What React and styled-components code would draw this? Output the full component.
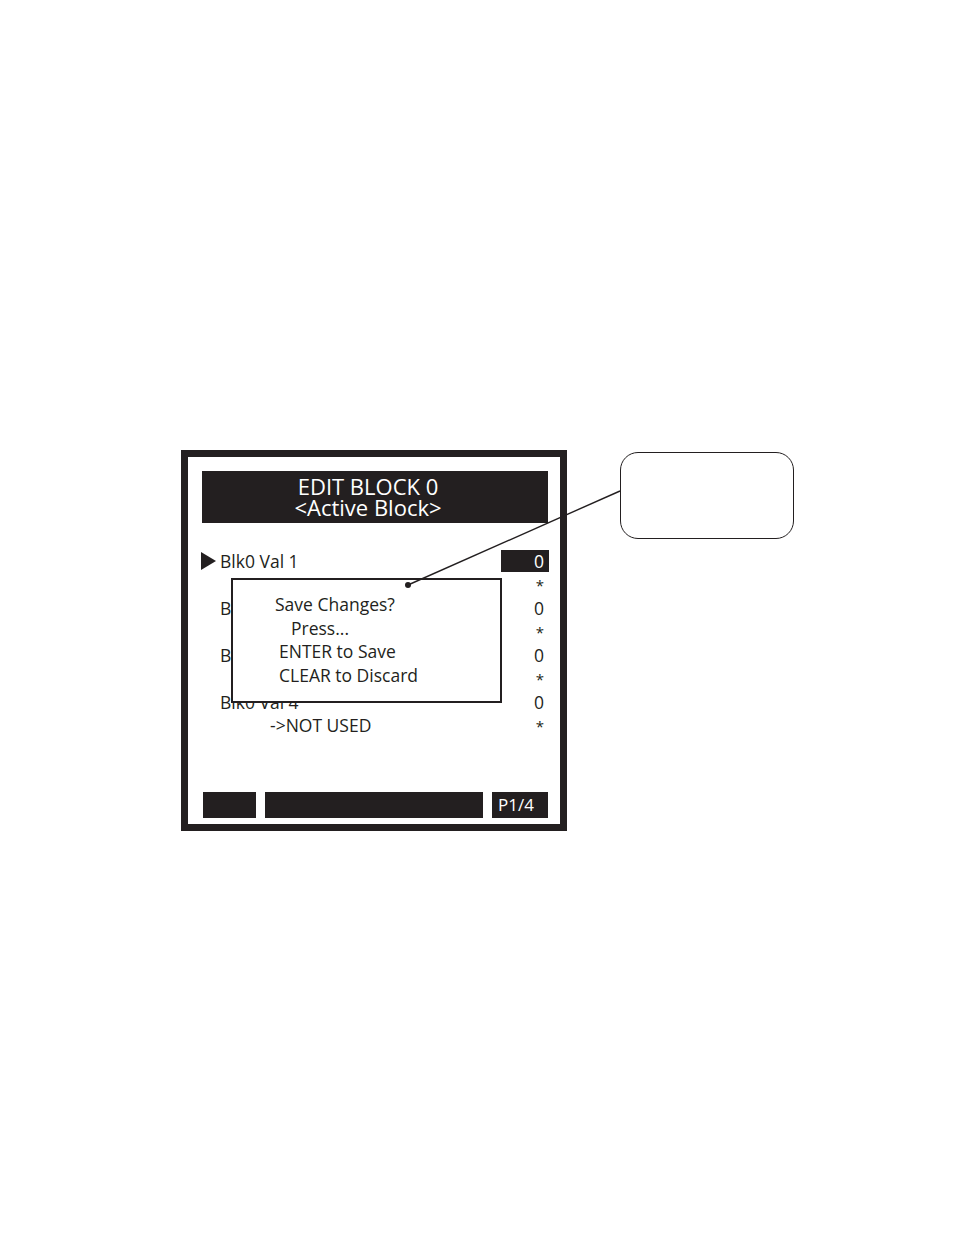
import styled, { createGlobalStyle } from 'styled-components';

const ink = '#231f20';

const GlobalStyle = createGlobalStyle`
  html, body {
    margin: 0;
    padding: 0;
    background: #ffffff;
  }
  body {
    font-family: "Open Sans", "Liberation Sans", sans-serif;
    color: ${ink};
  }
`;

const rows = [
  { label: 'Blk0 Val 1', value: '0', selected: true },
  { label: 'Blk0 Val 2', value: '0' },
  { label: 'Blk0 Val 3', value: '0' },
  { label: 'Blk0 Val 4', value: '0', note: '->NOT USED' },
];

const dialogLines = [
  { text: 'Save Changes?', indent: 42 },
  { text: 'Press...', indent: 58 },
  { text: 'ENTER to Save', indent: 46 },
  { text: 'CLEAR to Discard', indent: 46 },
];

const App = () => {
  return (
    <Page>
      <GlobalStyle />
      <Figure>
        <Screen>
          <Header>
            <HeaderLine>EDIT BLOCK 0</HeaderLine>
            <HeaderLine>{'<Active Block>'}</HeaderLine>
          </Header>
          <RowList>
            {rows.map((row) => (
              <Row key={row.label}>
                <Cursor>
                  {row.selected && (
                    <svg width="15" height="18" viewBox="0 0 15 18">
                      <polygon points="0,0 15,9 0,18" fill={ink} />
                    </svg>
                  )}
                </Cursor>
                <Label>{row.label}</Label>
                <Value selected={row.selected}>{row.value}</Value>
                <span />
                <SubLabel>{row.note}</SubLabel>
                <Star>*</Star>
              </Row>
            ))}
          </RowList>
          <Footer>
            <SoftKey width={53} />
            <SoftKey width={218} />
            <SoftKey width={56}>P1/4</SoftKey>
          </Footer>
          <Dialog>
            {dialogLines.map((line) => (
              <DialogLine key={line.text} indent={line.indent}>
                {line.text}
              </DialogLine>
            ))}
          </Dialog>
        </Screen>
        <Callout />
        <Leader width="954" height="1235" viewBox="0 0 954 1235">
          <line x1="408" y1="585" x2="620" y2="491" stroke={ink} strokeWidth="1.4" />
          <circle cx="408" cy="585" r="3" fill={ink} />
        </Leader>
      </Figure>
    </Page>
  );
};

const Page = styled.div`
  width: 954px;
  height: 1235px;
  background: #ffffff;
`;

const Figure = styled.div`
  display: flex;
  align-items: flex-start;
  padding: 450px 0 0 181px;
`;

const Screen = styled.div`
  position: relative;
  box-sizing: border-box;
  width: 386px;
  height: 381px;
  border: 7px solid ${ink};
  padding: 14px 11px 6px 13px;
  display: flex;
  flex-direction: column;
`;

const Header = styled.div`
  height: 52px;
  margin: 0 1px;
  padding-right: 14px;
  background: ${ink};
  color: #ffffff;
  display: flex;
  flex-direction: column;
  justify-content: center;
  align-items: center;
`;

const HeaderLine = styled.div`
  font-size: 22px;
  line-height: 21px;
  white-space: nowrap;
`;

const RowList = styled.div`
  margin-top: 27px;
  display: flex;
  flex-direction: column;
`;

const Row = styled.div`
  display: grid;
  grid-template-columns: 19px 1fr 48px;
  grid-template-rows: 22px 25px;
  align-items: center;
  font-size: 17.5px;
  line-height: 22px;
`;

const Cursor = styled.div`
  display: flex;
  align-items: center;
  height: 22px;
  padding-bottom: 1px;
  box-sizing: border-box;
`;

const Label = styled.div`
  white-space: nowrap;
`;

const SubLabel = styled.div`
  padding-left: 50px;
  white-space: nowrap;
  line-height: 25px;
`;

const Value = styled.div`
  height: 22px;
  box-sizing: border-box;
  padding-right: 5px;
  text-align: right;
  background: ${(p) => (p.selected ? ink : 'transparent')};
  color: ${(p) => (p.selected ? '#ffffff' : ink)};
`;

const Star = styled.div`
  text-align: right;
  padding-right: 5px;
  font-size: 15px;
  line-height: 25px;
  padding-top: 2px;
`;

const Footer = styled.div`
  margin-top: auto;
  margin-left: 2px;
  display: flex;
  gap: 9px;
`;

const SoftKey = styled.div`
  width: ${(p) => p.width}px;
  height: 26px;
  background: ${ink};
  color: #ffffff;
  font-size: 17px;
  line-height: 26px;
  padding-left: 6px;
  box-sizing: border-box;
`;

const Dialog = styled.div`
  position: absolute;
  left: 43px;
  top: 121px;
  width: 271px;
  height: 125px;
  box-sizing: border-box;
  border: 2px solid ${ink};
  background: #ffffff;
  padding-top: 13px;
  display: flex;
  flex-direction: column;
`;

const DialogLine = styled.div`
  padding-left: ${(p) => p.indent}px;
  font-size: 17.5px;
  line-height: 23.5px;
  white-space: nowrap;
`;

const Callout = styled.div`
  margin: 2px 0 0 53px;
  width: 174px;
  height: 87px;
  box-sizing: border-box;
  border: 1.5px solid ${ink};
  border-radius: 18px;
`;

const Leader = styled.svg`
  position: absolute;
  left: 0;
  top: 0;
  pointer-events: none;
`;

export default App;
